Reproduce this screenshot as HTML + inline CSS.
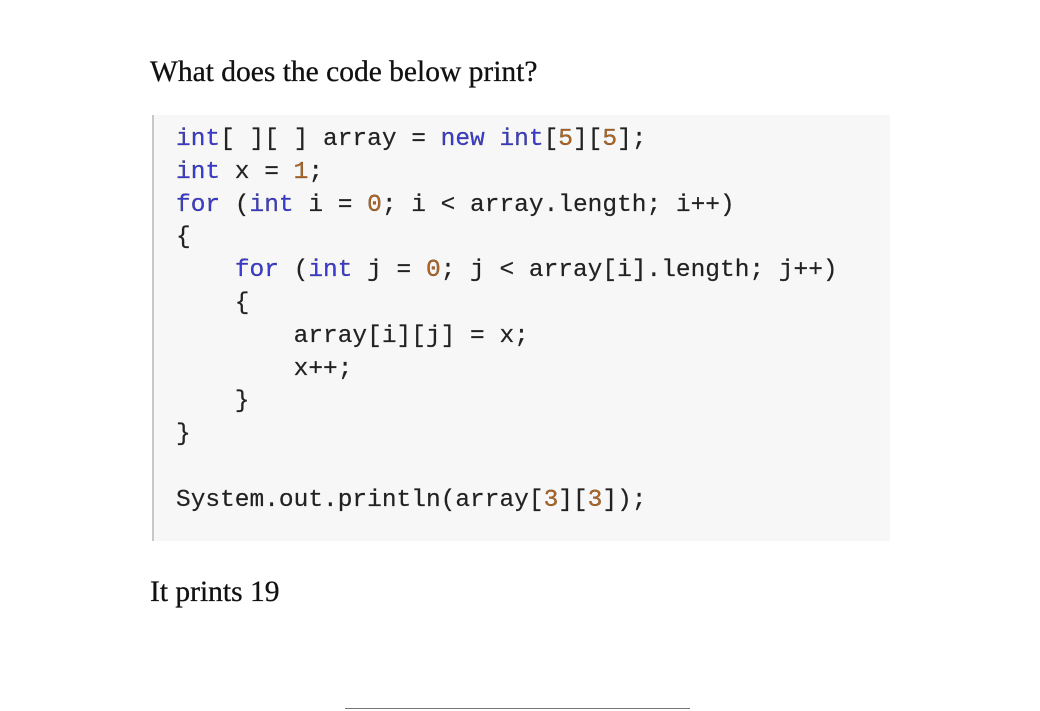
<!DOCTYPE html>
<html><head><style>
body{margin:0;width:1040px;height:711px;background:#fff;position:relative;overflow:hidden}
.h{position:absolute;left:150px;font-family:"Liberation Serif",serif;font-size:29.5px;color:#111;white-space:nowrap;-webkit-text-stroke:0.3px #111}
.box{position:absolute;left:152px;top:115px;width:738px;height:426px;background:#f7f7f7;border-left:2px solid #c8c8c8;box-sizing:border-box}
pre{position:absolute;left:176px;top:124px;margin:0;font-family:"Liberation Mono",monospace;font-size:24.5px;line-height:32.8px;color:#222;-webkit-text-stroke:0.2px #222}
.k{color:#3b3bd6}.n{color:#b5651d}
.line{position:absolute;left:345px;top:708px;width:345px;height:1px;background:#777}
</style></head><body>
<div class="h" style="top:56px">What does the code below print?</div>
<div class="box"></div>
<pre><span class="k">int</span>[ ][ ] array = <span class="k">new</span> <span class="k">int</span>[<span class="n">5</span>][<span class="n">5</span>];
<span class="k">int</span> x = <span class="n">1</span>;
<span class="k">for</span> (<span class="k">int</span> i = <span class="n">0</span>; i &lt; array.length; i++)
{
    <span class="k">for</span> (<span class="k">int</span> j = <span class="n">0</span>; j &lt; array[i].length; j++)
    {
        array[i][j] = x;
        x++;
    }
}

System.out.println(array[<span class="n">3</span>][<span class="n">3</span>]);</pre>
<div class="h" style="top:576px">It prints 19</div>
<div class="line"></div>
</body></html>
